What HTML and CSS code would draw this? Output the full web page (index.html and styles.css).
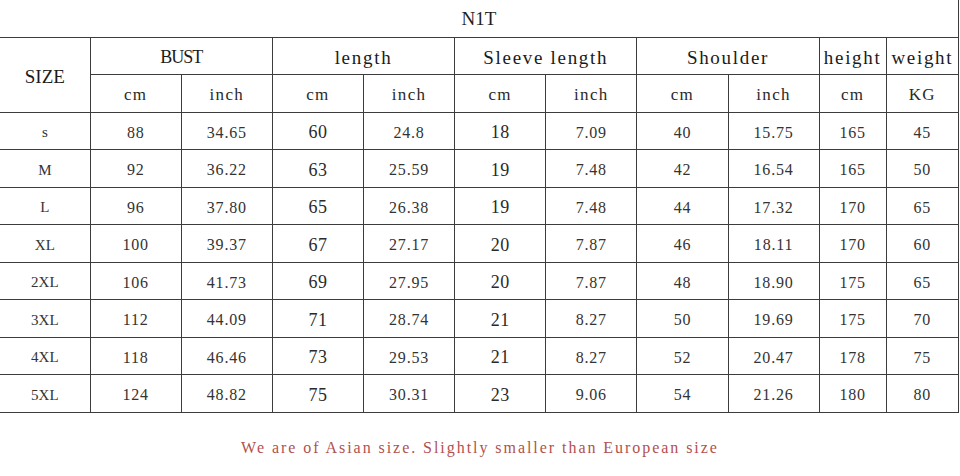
FILE: index.html
```html
<!DOCTYPE html>
<html lang="en">
<head>
<meta charset="utf-8">
<title>N1T size chart</title>
<link rel="stylesheet" href="styles.css">
</head>
<body>
<div class="chart">
  <table class="size-table">
    <colgroup>
      <col class="c-size">
      <col class="c-std"><col class="c-std">
      <col class="c-std"><col class="c-std">
      <col class="c-std"><col class="c-std">
      <col class="c-std"><col class="c-std">
      <col class="c-height">
      <col class="c-weight">
    </colgroup>
    <tr class="row title-row">
      <td class="title" colspan="11">N1T</td>
    </tr>
    <tr class="row head-row">
      <th class="size-head" rowspan="2">SIZE</th>
      <th class="upper" colspan="2">BUST</th>
      <th colspan="2">length</th>
      <th colspan="2">Sleeve length</th>
      <th colspan="2">Shoulder</th>
      <th>height</th>
      <th>weight</th>
    </tr>
    <tr class="row sub-row">
      <td>cm</td><td>inch</td>
      <td>cm</td><td>inch</td>
      <td>cm</td><td>inch</td>
      <td>cm</td><td>inch</td>
      <td>cm</td><td>KG</td>
    </tr>
    <tr class="row data-row">
      <td class="label">s</td><td>88</td><td>34.65</td><td class="big">60</td><td>24.8</td><td class="big">18</td><td>7.09</td><td>40</td><td>15.75</td><td>165</td><td>45</td>
    </tr>
    <tr class="row data-row">
      <td class="label">M</td><td>92</td><td>36.22</td><td class="big">63</td><td>25.59</td><td class="big">19</td><td>7.48</td><td>42</td><td>16.54</td><td>165</td><td>50</td>
    </tr>
    <tr class="row data-row">
      <td class="label">L</td><td>96</td><td>37.80</td><td class="big">65</td><td>26.38</td><td class="big">19</td><td>7.48</td><td>44</td><td>17.32</td><td>170</td><td>65</td>
    </tr>
    <tr class="row data-row">
      <td class="label">XL</td><td>100</td><td>39.37</td><td class="big">67</td><td>27.17</td><td class="big">20</td><td>7.87</td><td>46</td><td>18.11</td><td>170</td><td>60</td>
    </tr>
    <tr class="row data-row">
      <td class="label">2XL</td><td>106</td><td>41.73</td><td class="big">69</td><td>27.95</td><td class="big">20</td><td>7.87</td><td>48</td><td>18.90</td><td>175</td><td>65</td>
    </tr>
    <tr class="row data-row">
      <td class="label">3XL</td><td>112</td><td>44.09</td><td class="big">71</td><td>28.74</td><td class="big">21</td><td>8.27</td><td>50</td><td>19.69</td><td>175</td><td>70</td>
    </tr>
    <tr class="row data-row">
      <td class="label">4XL</td><td>118</td><td>46.46</td><td class="big">73</td><td>29.53</td><td class="big">21</td><td>8.27</td><td>52</td><td>20.47</td><td>178</td><td>75</td>
    </tr>
    <tr class="row data-row">
      <td class="label">5XL</td><td>124</td><td>48.82</td><td class="big">75</td><td>30.31</td><td class="big">23</td><td>9.06</td><td>54</td><td>21.26</td><td>180</td><td>80</td>
    </tr>
  </table>
  <p class="note">We are of Asian size. Slightly smaller than European size</p>
</div>
</body>
</html>
```
FILE: styles.css
```css
* {
  box-sizing: border-box;
}

html, body {
  margin: 0;
  padding: 0;
  background: #ffffff;
}

body {
  font-family: "Liberation Serif", "Times New Roman", serif;
  color: #2a2a2a;
}

.chart {
  width: 960px;
  height: 476px;
  display: flex;
  flex-direction: column;
}

.size-table {
  border-collapse: collapse;
  table-layout: fixed;
  width: 959px;
}

.c-size { width: 90px; }
.c-std { width: 91px; }
.c-height { width: 67px; }
.c-weight { width: 72px; }

.size-table th,
.size-table td {
  border: 1px solid #3c3c3c;
  padding: 4px 0 0;
  text-align: center;
  vertical-align: middle;
  font-weight: normal;
  white-space: nowrap;
}

.row {
  height: 37.5px;
}

.title-row {
  height: 37px;
}

.size-table .title {
  border-top: none;
  border-left: none;
  font-size: 19px;
  color: #1e1e1e;
  padding-top: 2px;
}

.head-row th {
  font-size: 19px;
  letter-spacing: 1.7px;
  color: #1a1a1a;
}

.head-row th.upper {
  letter-spacing: -1px;
  font-size: 18px;
}

.size-table .size-head {
  border-left: none;
  font-size: 19px;
  letter-spacing: 0;
}

.sub-row td {
  font-size: 17px;
  letter-spacing: 1.4px;
  color: #2a2a2a;
}

.data-row td {
  font-size: 16px;
  letter-spacing: 0.8px;
  color: #333333;
}

.data-row td.big {
  font-size: 18px;
  letter-spacing: 0.4px;
  color: #2a2a2a;
}

.size-table .label {
  border-left: none;
  font-size: 15px;
  letter-spacing: 0;
}

.note {
  margin: 25px 0 0;
  text-align: center;
  font-size: 16px;
  line-height: 20px;
  letter-spacing: 1.95px;
  color: #b2504e;
}
```
